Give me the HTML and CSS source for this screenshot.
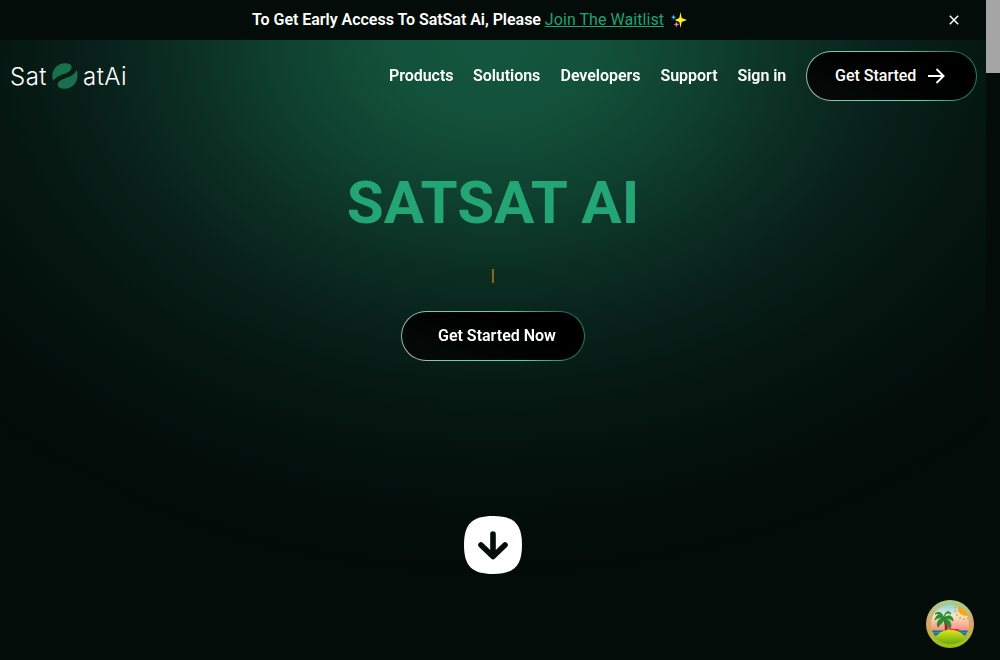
FILE: index.html
```html
<!DOCTYPE html>
<html lang="en">
<head>
<meta charset="utf-8">
<title>SatSat Ai</title>
<link rel="stylesheet" href="styles.css">
</head>
<body>
<div class="page">
  <div class="banner">
    <p class="banner-text">To Get Early Access To SatSat Ai, Please <a class="waitlist" href="#">Join The Waitlist</a></p>
    <svg class="sparkles" width="16" height="16" viewBox="0 0 16 16"><path fill="#fff21c" d="M9.500 0l1.200 6 5.300 2-5.300 2-1.200 6-1.200-6-4.600-2 4.600-2z"/><path fill="#45baf0" d="M2.500 2.500l.8 2 2 .8-2 .8-.8 2-.8-2-1.700-.8 1.700-.8z"/><path fill="#f472b6" d="M5.400 9.500l.8 2.100 2 .9-2 .8-.8 2.200-.8-2.200-1.900-.8 1.900-.9z"/></svg>
    <button class="close" aria-label="Close"><svg width="10" height="10" viewBox="0 0 10 10"><path d="M.8.8l8.400 8.400M9.200.8L.8 9.200" stroke="#fff" stroke-width="1.500"/></svg></button>
  </div>
  <main class="hero">
    <header class="header">
      <a class="logo" href="#"><span>Sat</span><svg class="logo-mark" width="26" height="26" viewBox="0 0 26 26"><path fill="#19704f" d="M1.200 18C-2 9 4 .5 13 .3c3.500 0 6.800 1.200 6.600 3.700C19.300 8 16 9.600 12 11 7 12.700 4 14 1.200 18z"/><path fill="#19704f" d="M24.600 7C28 16 22 25.700 13 25.700c-4.500 0-7.500-1.700-7.300-4C6 18 9 16.800 14 15 19 13.300 22.500 11.500 24.600 7z"/></svg><span>atAi</span></a>
      <nav class="nav">
        <a class="link" href="#">Products</a><a class="link" href="#">Solutions</a><a class="link" href="#">Developers</a><a class="link" href="#">Support</a><a class="link" href="#">Sign in</a>
        <a class="pill pill-nav" href="#">Get Started <svg width="18" height="16" viewBox="0 0 18 16"><path d="M0 8h15M8.500 1l7 7-7 7" fill="none" stroke="#fff" stroke-width="2"/></svg></a>
      </nav>
    </header>
    <h1 class="title">SATSAT AI</h1>
    <div class="typed">|</div>
    <a class="pill pill-hero" href="#">Get Started Now</a>
    <svg class="down" width="58" height="58" viewBox="0 0 58 58"><path fill="#fff" d="M29 0C50 0 58 8 58 29S50 58 29 58 0 50 0 29 8 0 29 0z"/><path d="M29 18v22M17 29l12 11.500L41 29" fill="none" stroke="#020c09" stroke-width="5.600" stroke-linecap="round" stroke-linejoin="round"/></svg>
  </main>
</div>
<div class="scrollbar"><div class="thumb"></div></div>
<button class="island" aria-label="Island">
<svg width="48" height="48" viewBox="0 0 48 48">
<defs><linearGradient id="ring" x1="0" y1="0" x2="0" y2="1"><stop offset="0" stop-color="#a5d08c"/><stop offset=".5" stop-color="#dda56a"/><stop offset=".75" stop-color="#b5b53f"/><stop offset="1" stop-color="#98c40c"/></linearGradient>
<linearGradient id="sky" x1="0" y1="0" x2="0" y2="1"><stop offset=".08" stop-color="#79d8ef"/><stop offset=".33" stop-color="#f6e5c5"/><stop offset=".68" stop-color="#fa8273"/></linearGradient>
<linearGradient id="hill" x1="0" y1="0" x2="0" y2="1"><stop offset="0" stop-color="#dce91c"/><stop offset="1" stop-color="#68aa0a"/></linearGradient><clipPath id="disc"><circle cx="24" cy="24" r="19"/></clipPath></defs>
<circle cx="24" cy="24" r="24" fill="url(#ring)"/><g clip-path="url(#disc)"><path fill="url(#sky)" d="M0 0h48v48H0z"/><path fill="#126f8c" d="M0 30.500h48V48H0z"/><path d="M3 32.500q2-1 4 0t4 0 4 0 4 0h14q2-1 4 0t8 0M3 35.500q2-1 4 0t4 0h24q2-1 4 0t6 0" fill="none" stroke="#26a6bd"/></g>
<circle cx="39" cy="9" r="10" fill="none" stroke="#f4a22d" stroke-width="2" stroke-dasharray="1.500 2.500" clip-path="url(#disc)"/><path fill="#f8a817" d="M32 6C31 12 35 17 42 15.500 40 11 37 8 32 6z"/>
<path d="M18 18q3 6 2 14" fill="none" stroke="#783915" stroke-width="2.800"/><path fill="#248d30" stroke="#248d30" d="M18 18C13 12 10 16 9 20c3-3 6-2 9-2-5 0-8 5-6 9 3-4 6-5 6-9 0 5 3 7 7 9 0-5-2-8-7-9 4 0 7 1 9 3 0-5-4-7-9-3 1-5 4-6 7-4-2-4-6-3-7 4-2-6-6-7-9-4 4-1 6 1 9 4z"/>
<path d="M22 26l3 4h7v3M25 30l-2 3" fill="none" stroke="#e31f62" stroke-width="1.800"/><path fill="url(#hill)" d="M9 38C15 27 33 27 40 38 32 46 17 46 9 38z"/>
</svg></button>
</body>
</html>
```
FILE: styles.css
```css
* { box-sizing: border-box; }
body { margin: 0; height: 660px; display: flex; overflow: hidden; background: #030c09; color: #fff; font-family: Roboto, sans-serif; }
a { color: inherit; text-decoration: none; }
button { border: 0; padding: 0; background: none; }
svg { display: block; flex: none; }
.page { width: 986px; height: 660px; display: flex; flex-direction: column; }
.banner { height: 40px; flex: none; display: flex; align-items: center; padding-left: 252px; background: #030c09; }
.banner-text { margin: 0; font-size: 16px; line-height: 24px; font-weight: 600; letter-spacing: -.03px; white-space: nowrap; }
.waitlist { color: #20a274; font-weight: 400; letter-spacing: .06px; text-decoration: underline; }
.sparkles { margin-left: 7px; }
.close { margin-left: auto; margin-right: 27px; }
.hero { flex: 1; display: flex; flex-direction: column; align-items: center; background: radial-gradient(ellipse 720px 536px at 50% 0, #145740 0, #12503a 16%, #0f402f 30%, #0b2d22 44%, #08211a 55%, #051610 70%, #030e0b 88%, #020b08 99%, #030c09 100%); }
.header { width: 100%; height: 72px; display: flex; align-items: center; justify-content: space-between; padding: 0 9px 0 10px; }
.logo { display: flex; align-items: center; font: 350 24px/28px Inter, sans-serif; letter-spacing: .5px; }
.logo span { padding-top: 2px; }
.logo-mark { margin: 0 5px; }
.nav { display: flex; align-items: center; gap: 20px; font-size: 16px; line-height: 24px; font-weight: 600; letter-spacing: -.04px; white-space: nowrap; }
.link { will-change: transform; }
.link:nth-child(n+3) { transform: translateX(.5px); }
.pill { height: 50px; display: flex; align-items: center; font-size: 16px; font-weight: 600; border: 1px solid transparent; border-radius: 25px; background: linear-gradient(20deg, #050b09, #000 65%) padding-box, linear-gradient(70deg, #a8b6b1 0, #58d8a4 38%, #49dda3 60%, #1c7858 88%, #238d67 100%) border-box; }
.pill-nav { width: 171px; padding-left: 28px; gap: 12px; font-weight: 500; letter-spacing: 0; }
.pill-hero { width: 184px; padding: 0 0 2px 36px; margin-top: 23px; letter-spacing: 0; will-change: transform; }
.title { margin: 55px 0 0; color: #23a576; font-size: 60px; line-height: 72px; font-weight: 700; white-space: nowrap; }
.typed { margin-top: 25px; height: 24px; color: #f09a1c; font-size: 16px; line-height: 24px; opacity: .9; will-change: opacity; }
.down { margin-top: 155px; }
.scrollbar { width: 14px; background: #030c09; }
.thumb { height: 73px; background: #a5a5a5; }
.island { position: absolute; right: 26px; bottom: 12px; }
```
